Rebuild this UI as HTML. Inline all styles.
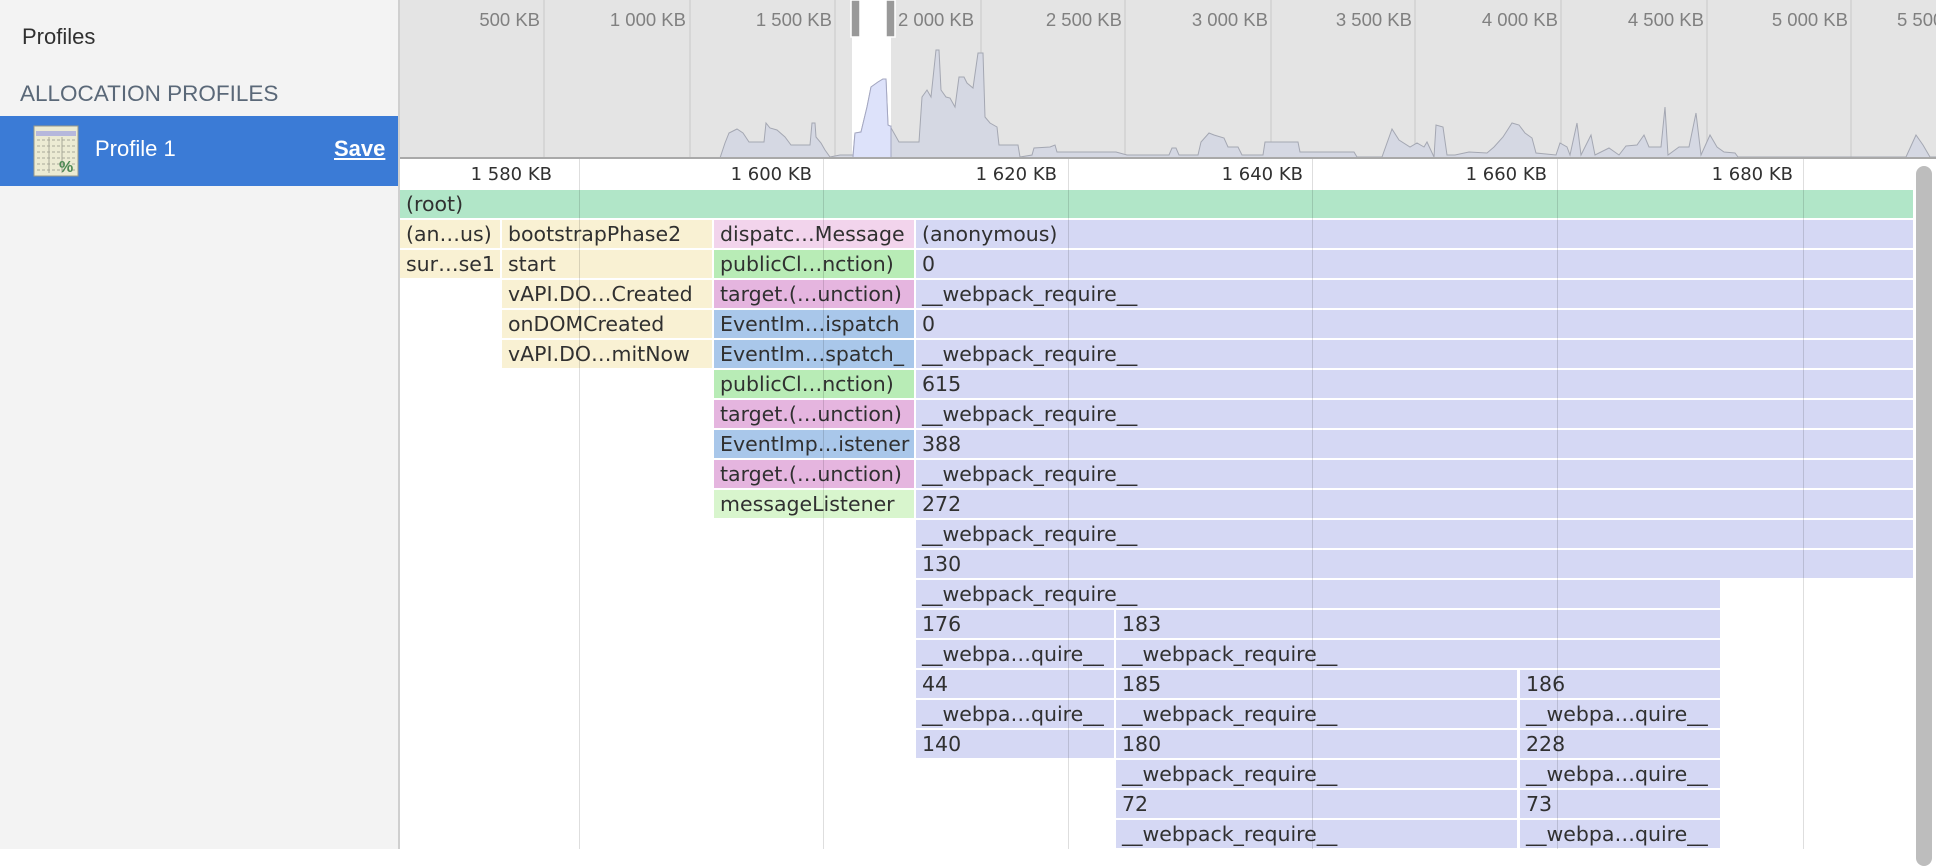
<!DOCTYPE html>
<html><head><meta charset="utf-8"><style>
*{margin:0;padding:0;box-sizing:border-box}
body{width:1936px;height:849px;overflow:hidden;position:relative;background:#fff;font-family:"Liberation Sans","DejaVu Sans",sans-serif}
#side{position:absolute;left:0;top:0;height:849px;background:#f3f3f3;border-right:2px solid #cfcfcf;width:400px}
.t{position:absolute;white-space:nowrap}
#ov{position:absolute;left:400px;top:0;width:1536px;height:159px;background:#e4e4e4;border-bottom:2px solid #a9a9a9;overflow:hidden}
.ol{position:absolute;font-size:18.5px;color:#808080;top:9px;text-align:right;width:140px}
.c{position:absolute;height:28px;font-family:"DejaVu Sans","Liberation Sans",sans-serif;font-size:20.5px;color:#303030;line-height:28px;padding-left:6px;white-space:nowrap;overflow:hidden}
.R{background:#b1e6c8}.Y{background:#f9f1d3}.K{background:#f2d4ec}.G{background:#b8ecb6}.P{background:#e5b5df}.B{background:#a9c7ea}.H{background:#d8f5cd}.L{background:#d5d8f4}
.gl{position:absolute;top:159px;height:690px;width:1px;background:rgba(0,0,0,0.13)}
.al{position:absolute;top:164px;font-family:"DejaVu Sans","Liberation Sans",sans-serif;font-size:18px;color:#303030;width:120px;text-align:right}
</style></head><body>
<div id="side">
<div class="t" style="left:22px;top:24px;font-size:22px;color:#303030">Profiles</div>
<div class="t" style="left:20px;top:81px;font-size:22.5px;color:#5a6878">ALLOCATION PROFILES</div>
<div style="position:absolute;left:0;top:116px;width:398px;height:70px;background:#3b7bd6"></div>
<svg style="position:absolute;left:33px;top:125px" width="47" height="53" viewBox="0 0 47 53">
<rect x="1" y="1" width="44" height="50" fill="#ecebd3" stroke="#9a9a88"/>
<rect x="3" y="6" width="40" height="5" fill="#b6b8dc"/>
<g stroke="#a8a898" stroke-width="1" stroke-dasharray="3 2"><line x1="4" y1="15" x2="42" y2="15"/><line x1="4" y1="21" x2="42" y2="21"/><line x1="4" y1="27" x2="42" y2="27"/><line x1="4" y1="33" x2="42" y2="33"/><line x1="4" y1="39" x2="42" y2="39"/><line x1="4" y1="45" x2="42" y2="45"/></g>
<line x1="16" y1="12" x2="16" y2="48" stroke="#a8a898"/><line x1="29" y1="12" x2="29" y2="48" stroke="#a8a898"/>
<text x="26" y="47" font-size="16" font-weight="bold" fill="#4f8a55" font-family="Liberation Sans">%</text>
</svg>
<div class="t" style="left:95px;top:136px;font-size:22px;color:#fff">Profile 1</div>
<div class="t" style="left:334px;top:136px;font-size:22px;color:#fff;text-decoration:underline;font-weight:bold">Save</div>
</div>
<div id="ov">
<svg width="1536" height="159" style="position:absolute;left:0;top:0">
<rect x="452" y="0" width="39" height="159" fill="#fff"/>
<g stroke="#d2d2d2" stroke-width="1.5"><line x1="144" y1="0" x2="144" y2="159"/><line x1="290" y1="0" x2="290" y2="159"/><line x1="435" y1="0" x2="435" y2="159"/><line x1="581" y1="0" x2="581" y2="159"/><line x1="725" y1="0" x2="725" y2="159"/><line x1="871" y1="0" x2="871" y2="159"/><line x1="1015" y1="0" x2="1015" y2="159"/><line x1="1161" y1="0" x2="1161" y2="159"/><line x1="1307" y1="0" x2="1307" y2="159"/><line x1="1451" y1="0" x2="1451" y2="159"/></g>
<g transform="translate(-400,0)">
<polygon fill="#d5d8e3" stroke="#a4a7b2" stroke-width="1" points="720,158 725,143 729,133 737,129 743,133 749,142 764,142 766,123 770,128 777,130 785,137 791,145 810,145 812,123 815,123 816,137 821,143 825,150 830,157 840,155 853,155 855,133 861,132 867,107 871,87 878,82 883,79 886,79 888,125 890,126 899,142 919,142 922,97 927,90 931,97 936,50 939,50 941,90 946,97 950,98 955,107 959,77 964,77 967,83 973,88 978,53 983,53 985,117 990,123 997,127 999,145 1018,145 1020,157 1032,155 1034,148 1050,147 1055,145 1057,152 1116,152 1127,155 1169,155 1172,148 1176,148 1179,155 1198,155 1201,142 1209,133 1214,135 1224,138 1228,147 1238,147 1242,155 1263,155 1265,142 1298,142 1300,152 1354,152 1357,157 1382,157 1392,129 1399,140 1410,147 1417,143 1424,147 1427,142 1434,157 1436,125 1443,127 1447,155 1455,155 1469,152 1487,153 1494,147 1503,137 1512,123 1519,125 1525,133 1532,138 1536,153 1556,155 1560,143 1567,147 1570,155 1577,123 1581,155 1591,135 1595,155 1609,148 1619,155 1626,146 1637,145 1644,135 1649,147 1661,147 1665,107 1668,155 1679,147 1689,147 1696,113 1701,155 1710,135 1717,147 1724,152 1735,153 1738,157 1906,157 1916,135 1923,145 1930,157 1936,157 1936,159 720,159"/>
<polygon fill="#dde2fa" stroke="#a4a7c2" stroke-width="1" points="853,157 855,133 861,132 867,107 871,87 878,82 883,79 886,79 888,125 890,126 891,126 891,158 853,158"/>
</g>
<rect x="451" y="0" width="9" height="37" fill="#999" stroke="#fff" stroke-width="1.5"/>
<rect x="486" y="0" width="9" height="37" fill="#999" stroke="#fff" stroke-width="1.5"/>
</svg>
<div class="ol" style="left:0px">500 KB</div>
<div class="ol" style="left:146px">1 000 KB</div>
<div class="ol" style="left:292px">1 500 KB</div>
<div class="t" style="left:498px;top:9px;font-size:18.5px;color:#808080">2 000 KB</div>
<div class="ol" style="left:582px">2 500 KB</div>
<div class="ol" style="left:728px">3 000 KB</div>
<div class="ol" style="left:872px">3 500 KB</div>
<div class="ol" style="left:1018px">4 000 KB</div>
<div class="ol" style="left:1164px">4 500 KB</div>
<div class="ol" style="left:1308px">5 000 KB</div>
<div class="t" style="left:1497px;top:9px;font-size:18.5px;color:#808080">5 500 KB</div>
</div>
<div class="al" style="left:432px">1 580 KB</div>
<div class="al" style="left:692px">1 600 KB</div>
<div class="al" style="left:937px">1 620 KB</div>
<div class="al" style="left:1183px">1 640 KB</div>
<div class="al" style="left:1427px">1 660 KB</div>
<div class="al" style="left:1673px">1 680 KB</div>

<div class="c R" style="left:400px;top:190px;width:1513px">(root)</div>

<div class="c Y" style="left:400px;top:220px;width:100px">(an…us)</div>
<div class="c Y" style="left:502px;top:220px;width:210px">bootstrapPhase2</div>
<div class="c K" style="left:714px;top:220px;width:200px">dispatc…Message</div>
<div class="c L" style="left:916px;top:220px;width:997px">(anonymous)</div>

<div class="c Y" style="left:400px;top:250px;width:100px">sur…se1</div>
<div class="c Y" style="left:502px;top:250px;width:210px">start</div>
<div class="c G" style="left:714px;top:250px;width:200px">publicCl…nction)</div>
<div class="c L" style="left:916px;top:250px;width:997px">0</div>

<div class="c Y" style="left:502px;top:280px;width:210px">vAPI.DO…Created</div>
<div class="c P" style="left:714px;top:280px;width:200px">target.(…unction)</div>
<div class="c L" style="left:916px;top:280px;width:997px">__webpack_require__</div>

<div class="c Y" style="left:502px;top:310px;width:210px">onDOMCreated</div>
<div class="c B" style="left:714px;top:310px;width:200px">EventIm…ispatch</div>
<div class="c L" style="left:916px;top:310px;width:997px">0</div>

<div class="c Y" style="left:502px;top:340px;width:210px">vAPI.DO…mitNow</div>
<div class="c B" style="left:714px;top:340px;width:200px">EventIm…spatch_</div>
<div class="c L" style="left:916px;top:340px;width:997px">__webpack_require__</div>

<div class="c G" style="left:714px;top:370px;width:200px">publicCl…nction)</div>
<div class="c L" style="left:916px;top:370px;width:997px">615</div>

<div class="c P" style="left:714px;top:400px;width:200px">target.(…unction)</div>
<div class="c L" style="left:916px;top:400px;width:997px">__webpack_require__</div>

<div class="c B" style="left:714px;top:430px;width:200px">EventImp…istener</div>
<div class="c L" style="left:916px;top:430px;width:997px">388</div>

<div class="c P" style="left:714px;top:460px;width:200px">target.(…unction)</div>
<div class="c L" style="left:916px;top:460px;width:997px">__webpack_require__</div>

<div class="c H" style="left:714px;top:490px;width:200px">messageListener</div>
<div class="c L" style="left:916px;top:490px;width:997px">272</div>

<div class="c L" style="left:916px;top:520px;width:997px">__webpack_require__</div>
<div class="c L" style="left:916px;top:550px;width:997px">130</div>
<div class="c L" style="left:916px;top:580px;width:804px">__webpack_require__</div>

<div class="c L" style="left:916px;top:610px;width:198px">176</div>
<div class="c L" style="left:1116px;top:610px;width:604px">183</div>

<div class="c L" style="left:916px;top:640px;width:198px">__webpa…quire__</div>
<div class="c L" style="left:1116px;top:640px;width:604px">__webpack_require__</div>

<div class="c L" style="left:916px;top:670px;width:198px">44</div>
<div class="c L" style="left:1116px;top:670px;width:401px">185</div>
<div class="c L" style="left:1520px;top:670px;width:200px">186</div>

<div class="c L" style="left:916px;top:700px;width:198px">__webpa…quire__</div>
<div class="c L" style="left:1116px;top:700px;width:401px">__webpack_require__</div>
<div class="c L" style="left:1520px;top:700px;width:200px">__webpa…quire__</div>

<div class="c L" style="left:916px;top:730px;width:198px">140</div>
<div class="c L" style="left:1116px;top:730px;width:401px">180</div>
<div class="c L" style="left:1520px;top:730px;width:200px">228</div>

<div class="c L" style="left:1116px;top:760px;width:401px">__webpack_require__</div>
<div class="c L" style="left:1520px;top:760px;width:200px">__webpa…quire__</div>

<div class="c L" style="left:1116px;top:790px;width:401px">72</div>
<div class="c L" style="left:1520px;top:790px;width:200px">73</div>

<div class="c L" style="left:1116px;top:820px;width:401px">__webpack_require__</div>
<div class="c L" style="left:1520px;top:820px;width:200px">__webpa…quire__</div>

<div class="gl" style="left:579px"></div>
<div class="gl" style="left:823px"></div>
<div class="gl" style="left:1068px"></div>
<div class="gl" style="left:1312px"></div>
<div class="gl" style="left:1557px"></div>
<div class="gl" style="left:1803px"></div>

<div style="position:absolute;left:1916px;top:166px;width:16px;height:700px;background:#bdbdbd;border-radius:8px"></div>
</body></html>
